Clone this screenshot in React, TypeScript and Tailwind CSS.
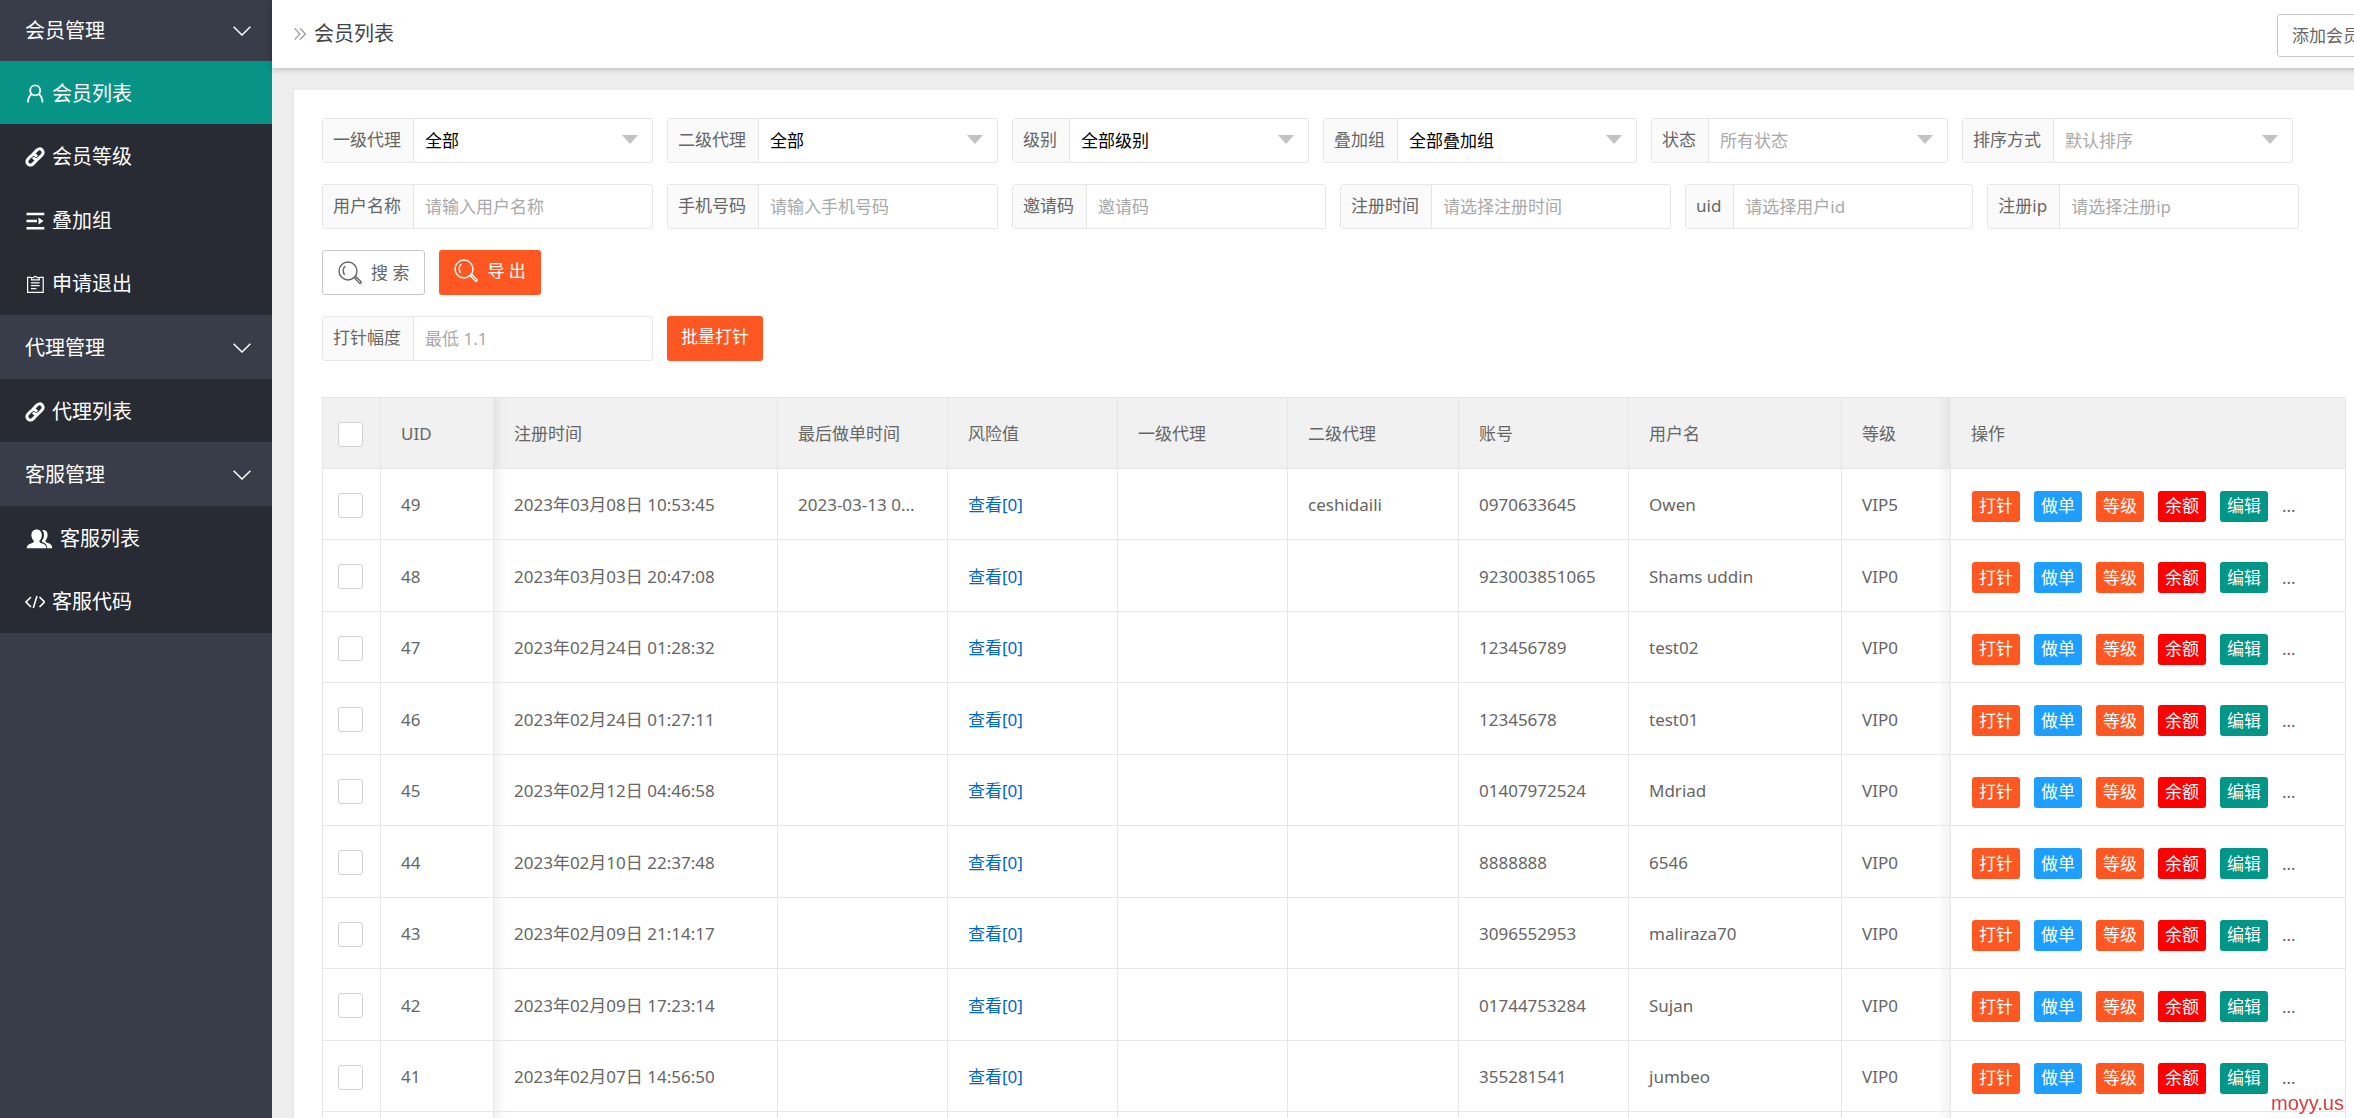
import React, { useState } from 'react';
import { clsx } from 'clsx';

type IconProps = { className?: string };

const UserIcon = ({ className }: IconProps) => (
  <svg viewBox="0 0 20 20" fill="none" stroke="currentColor" strokeWidth="1.8" className={className}>
    <circle cx="10.2" cy="6.4" r="5" />
    <path d="M6.6 10.2C4.2 11.8 3 14.600 2.900 18.500M13.800 10.200c2.400 1.600 3.600 4.400 3.700 8.300" />
  </svg>
);

const LinkIcon = ({ className }: IconProps) => (
  <svg viewBox="0 0 20 20" fill="none" stroke="currentColor" strokeWidth="3" strokeLinecap="round" className={className}>
    <path d="M7.900 7.300l4-4.200c1.500-1.600 3.700-1.600 5.100-.2 1.500 1.400 1.500 3.600 0 5.100l-3.200 3.300c-1.400 1.400-3.600 1.400-5 0" />
    <path d="M12.100 12.700l-4 4.200c-1.500 1.600-3.700 1.600-5.100.2-1.500-1.400-1.500-3.600 0-5.100l3.200-3.300c1.400-1.400 3.600-1.400 5 0" />
  </svg>
);

const StackIcon = ({ className }: IconProps) => (
  <svg viewBox="0 0 20 20" fill="currentColor" className={className}>
    <path d="M1.500 1.800h17.800v2.400H1.500zM1.500 8.800h10.500v2.400H1.500zM1.500 16h17.800v2.400H1.500zM13.500 6.600l5 3.400-5 3.400z" />
  </svg>
);

const FormIcon = ({ className }: IconProps) => (
  <svg viewBox="0 0 20 20" fill="none" stroke="currentColor" strokeWidth="1.200" className={className}>
    <path d="M6.500 3.300H2.600v15h15.600v-15h-3.900" />
    <path d="M6.500 5.800V3.600h2.100a1.900 1.900 0 0 1 3.600 0h2.100v2.200z" />
    <path d="M6 8.900h8.600M6 11.700h8.600M6 14.600h5.400" />
  </svg>
);

const FriendsIcon = ({ className }: IconProps) => (
  <svg viewBox="0 0 28 20" fill="currentColor" className={className}>
    <path d="M17.300 1.300c2.900-.8 5.300 1.100 5.300 4.600 0 2.200-.8 4.200-2 5.300-.3 1.400.2 2 1.800 2.600 3 1.100 4.800 2.100 4.800 5.400h-4.900c-.2-3.300-1.500-4.600-4.500-5.900-.9-.4-1.100-.8-1-1.500 1.400-1.500 2.200-3.600 2.200-5.800 0-1.900-.6-3.500-1.700-4.700z" />
    <path d="M11.600.4c3 0 5.200 2.200 5.200 5.500 0 2.300-.9 4.500-2.300 5.700-.3 1.500.2 2 2 2.700 3.200 1.200 4.900 1.900 5 4.900H1.700c.1-3 1.800-3.700 5-4.900 1.800-.7 2.300-1.200 2-2.700C7.300 10.400 6.400 8.200 6.400 5.900 6.400 2.600 8.600.4 11.600.4z" />
  </svg>
);

const CodeIcon = ({ className }: IconProps) => (
  <svg viewBox="0 0 20 20" fill="none" stroke="currentColor" strokeWidth="1.600" className={className}>
    <path d="M6 5L1 10l5 5M14.500 5l5 5-5 5M12 4L8.300 16" />
  </svg>
);

const ChevronIcon = ({ className }: IconProps) => (
  <svg viewBox="0 0 18 10" fill="none" stroke="currentColor" strokeWidth="1.500" className={className}>
    <path d="M.6.700L9 9 17.400.700" />
  </svg>
);

const DoubleArrowIcon = ({ className }: IconProps) => (
  <svg viewBox="0 0 12 12" fill="none" stroke="currentColor" strokeWidth="1.200" className={className}>
    <path d="M.6.300L5.900 6 .6 11.700M6 .300L11.300 6 6 11.700" />
  </svg>
);

const SearchIcon = ({ className }: IconProps) => (
  <svg viewBox="0 0 24 24" fill="none" stroke="currentColor" strokeWidth="1.400" className={className}>
    <circle cx="10" cy="10" r="9" />
    <path d="M7.400 5.200C5 6.700 4.300 10.600 6.600 13.800" />
    <path d="M16.200 16.500l1.300-1.200 5.300 5.300c.9.900-.6 2.400-1.500 1.500z" />
  </svg>
);

const menus = [
  {
    title: '会员管理',
    items: [
      { label: '会员列表', icon: UserIcon },
      { label: '会员等级', icon: LinkIcon },
      { label: '叠加组', icon: StackIcon },
      { label: '申请退出', icon: FormIcon }
    ]
  },
  {
    title: '代理管理',
    items: [{ label: '代理列表', icon: LinkIcon }]
  },
  {
    title: '客服管理',
    items: [
      { label: '客服列表', icon: FriendsIcon, wide: true },
      { label: '客服代码', icon: CodeIcon }
    ]
  }
];

const selects = [
  { id: 'agent1', label: '一级代理', value: '全部' },
  { id: 'agent2', label: '二级代理', value: '全部' },
  { id: 'level', label: '级别', value: '全部级别' },
  { id: 'group', label: '叠加组', value: '全部叠加组' },
  { id: 'status', label: '状态', value: '所有状态', muted: true },
  { id: 'sort', label: '排序方式', value: '默认排序', muted: true }
];

const inputs = [
  { id: 'username', label: '用户名称', placeholder: '请输入用户名称' },
  { id: 'tel', label: '手机号码', placeholder: '请输入手机号码' },
  { id: 'invite', label: '邀请码', placeholder: '邀请码' },
  { id: 'regtime', label: '注册时间', placeholder: '请选择注册时间' },
  { id: 'uid', label: 'uid', placeholder: '请选择用户id' },
  { id: 'regip', label: '注册ip', placeholder: '请选择注册ip' }
];

const members = [
  { uid: 49, regTime: '2023年03月08日 10:53:45', lastTime: '2023-03-13 0...', agent2: 'ceshidaili', account: '0970633645', name: 'Owen', level: 'VIP5' },
  { uid: 48, regTime: '2023年03月03日 20:47:08', account: '923003851065', name: 'Shams uddin', level: 'VIP0' },
  { uid: 47, regTime: '2023年02月24日 01:28:32', account: '123456789', name: 'test02', level: 'VIP0' },
  { uid: 46, regTime: '2023年02月24日 01:27:11', account: '12345678', name: 'test01', level: 'VIP0' },
  { uid: 45, regTime: '2023年02月12日 04:46:58', account: '01407972524', name: 'Mdriad', level: 'VIP0' },
  { uid: 44, regTime: '2023年02月10日 22:37:48', account: '8888888', name: '6546', level: 'VIP0' },
  { uid: 43, regTime: '2023年02月09日 21:14:17', account: '3096552953', name: 'maliraza70', level: 'VIP0' },
  { uid: 42, regTime: '2023年02月09日 17:23:14', account: '01744753284', name: 'Sujan', level: 'VIP0' },
  { uid: 41, regTime: '2023年02月07日 14:56:50', account: '355281541', name: 'jumbeo', level: 'VIP0' }
];

const actions = [
  { label: '打针', color: 'bg-[#ff5722]' },
  { label: '做单', color: 'bg-[#1e9fff]' },
  { label: '等级', color: 'bg-[#ff5722]' },
  { label: '余额', color: 'bg-[#ff0000]' },
  { label: '编辑', color: 'bg-[#009688]' }
];

const leftShade = 'bg-[linear-gradient(to_right,rgba(0,0,0,0.05),transparent_12px)]';
const rightShade = 'bg-[linear-gradient(to_left,rgba(0,0,0,0.05),transparent_12px)]';

const columns = [
  { title: 'UID', width: 'w-[113px]' },
  { title: '注册时间', width: 'w-[284px]', shade: leftShade },
  { title: '最后做单时间', width: 'w-[170px]' },
  { title: '风险值', width: 'w-[170px]' },
  { title: '一级代理', width: 'w-[170px]' },
  { title: '二级代理', width: 'w-[171px]' },
  { title: '账号', width: 'w-[170px]' },
  { title: '用户名', width: 'w-[213px]' },
  { title: '等级', width: 'w-[109px]', shade: rightShade },
  { title: '操作', width: '' }
];

const cell = 'border-r border-b border-[#e6e6e6] pt-[2px] pl-5 text-left font-normal whitespace-nowrap';

const Field = ({ id, label, children }: { id: string; label: string; children: React.ReactNode }) => (
  <div className="flex h-[45px] rounded-[3px] border border-[#e6e6e6] bg-white">
    <label htmlFor={id} className="flex items-center bg-[#fafafa] pr-[12px] pl-[10px] pb-[2px]">
      {label}
    </label>
    <div className="relative w-[239px] border-l border-[#e6e6e6]">{children}</div>
  </div>
);

const Checkbox = ({ label }: { label: string }) => (
  <input
    type="checkbox"
    aria-label={label}
    className="block h-[25px] w-[25px] appearance-none rounded-[3px] border border-[#d2d2d2] bg-white checked:bg-[#5fb878]"
  />
);

const Sidebar = () => {
  const [active, setActive] = useState('会员列表');

  return (
    <aside className="w-[272px] shrink-0 bg-[#393d49] text-[20px] text-white">
      {menus.map((menu, index) => (
        <nav key={menu.title}>
          <button
            className={clsx(
              'flex w-full items-center justify-between pr-[21px] pl-[25px]',
              index === 0 ? 'h-[61px]' : 'h-[64px] pt-[2px]'
            )}
          >
            {menu.title}
            <ChevronIcon className="h-[10px] w-[18px]" />
          </button>
          <ul className="bg-[#282b33]">
            {menu.items.map(item => (
              <li key={item.label} className="h-[63px] even:h-[64px]">
                <a
                  href="#"
                  onClick={() => setActive(item.label)}
                  className={clsx('flex h-full items-center gap-[7px] pt-[2px] pl-[25px]', active === item.label && 'bg-[#079487]')}
                >
                  <item.icon className={clsx('h-5', item.wide ? 'w-7' : 'w-5')} />
                  {item.label}
                </a>
              </li>
            ))}
          </ul>
        </nav>
      ))}
    </aside>
  );
};

const Filters = () => (
  <form className="flex flex-col gap-[21px]" onSubmit={e => e.preventDefault()}>
    <div className="flex gap-[14px]">
      {selects.map(item => (
        <Field key={item.id} id={item.id} label={item.label}>
          <select
            id={item.id}
            className={clsx(
              'h-full w-full appearance-none bg-transparent pl-[11px] outline-none',
              item.muted ? 'text-[#a9a9a9]' : 'text-black'
            )}
          >
            <option>{item.value}</option>
          </select>
          <svg viewBox="0 0 16 9" className="pointer-events-none absolute top-4 right-[14px] h-[9px] w-4 fill-[#c2c2c2]">
            <path d="M0 0h16L8 9z" />
          </svg>
        </Field>
      ))}
    </div>

    <div className="flex gap-[14px]">
      {inputs.map(item => (
        <Field key={item.id} id={item.id} label={item.label}>
          <input
            id={item.id}
            type="text"
            placeholder={item.placeholder}
            className="h-full w-full bg-transparent pl-[11px] outline-none placeholder:text-[#a9a9a9]"
          />
        </Field>
      ))}
    </div>

    <div className="flex gap-[14px]">
      <button className="flex h-[45px] items-center gap-[9px] rounded-[3px] border border-[#c9c9c9] bg-white px-[15px]">
        <SearchIcon className="h-6 w-6" />
        搜 索
      </button>
      <button className="flex h-[45px] items-center gap-[9px] rounded-[3px] bg-[#ff5722] px-[15px] pb-1 text-white">
        <SearchIcon className="h-6 w-6" />
        导 出
      </button>
    </div>

    <div className="flex gap-[14px]">
      <Field id="rate" label="打针幅度">
        <input
          id="rate"
          type="text"
          placeholder="最低 1.1"
          className="h-full w-full bg-transparent pl-[11px] outline-none placeholder:text-[#a9a9a9]"
        />
      </Field>
      <button className="h-[45px] rounded-[3px] bg-[#ff5722] px-[14px] pb-1 text-white">批量打针</button>
    </div>
  </form>
);

const MemberTable = () => (
  <table className="mt-9 w-full table-fixed border-separate border-spacing-0 border-t border-l border-[#e6e6e6]">
    <thead>
      <tr className="h-[71px] bg-[#f1f1f1]">
        <th className="w-[58px] border-r border-b border-[#e6e6e6] pt-[2px] pl-[15px]">
          <Checkbox label="全选" />
        </th>
        {columns.map(column => (
          <th key={column.title} className={clsx(cell, column.width, column.shade)}>
            {column.title}
          </th>
        ))}
      </tr>
    </thead>
    <tbody>
      {members.map(member => (
        <tr key={member.uid} className="h-[71px] even:h-[72px]">
          <td className="border-r border-b border-[#e6e6e6] pt-[2px] pl-[15px]">
            <Checkbox label={`选择 ${member.uid}`} />
          </td>
          <td className={cell}>{member.uid}</td>
          <td className={clsx(cell, leftShade)}>{member.regTime}</td>
          <td className={cell}>{member.lastTime}</td>
          <td className={cell}>
            <a href="#" className="text-[#0066cc]">
              查看[0]
            </a>
          </td>
          <td className={cell}></td>
          <td className={cell}>{member.agent2}</td>
          <td className={cell}>{member.account}</td>
          <td className={cell}>{member.name}</td>
          <td className={clsx(cell, rightShade)}>{member.level}</td>
          <td className="border-r border-b border-[#e6e6e6] pt-[4px] pl-[21px]">
            <div className="flex items-center gap-[14px]">
              {actions.map(action => (
                <button key={action.label} className={clsx('h-[31px] w-12 rounded-[3px] text-white', action.color)}>
                  {action.label}
                </button>
              ))}
              <span>...</span>
            </div>
          </td>
        </tr>
      ))}
      <tr className="h-[71px]">
        <td className={cell}></td>
        {columns.map(column => (
          <td key={column.title} className={clsx(cell, column.shade)}></td>
        ))}
      </tr>
    </tbody>
  </table>
);

export default function App() {
  return (
    <div className="flex h-screen overflow-hidden bg-[#eeeeee] font-['Noto_Sans','Noto_Sans_CJK_SC',sans-serif] text-[17px] leading-6 text-[#666666]">
      <Sidebar />

      {/* The page is slightly wider than the window and runs off its right side */}
      <main className="-mr-[42px] min-w-0 flex-1">
        <header className="flex h-[68px] items-center justify-between bg-white pr-[21px] pl-[22px] shadow-[0_1px_6px_rgba(0,0,0,0.25)]">
          <h1 className="flex items-center gap-2 text-[20px] text-[#444444]">
            <DoubleArrowIcon className="h-3 w-3 text-[#999999]" />
            会员列表
          </h1>
          <button className="mt-[3px] h-[43px] rounded-[3px] border border-[#c9c9c9] bg-white px-[14px]">添加会员</button>
        </header>

        <section className="m-[22px] bg-white p-7 shadow-[0_1px_6px_rgba(0,0,0,0.06)]">
          <Filters />
          <MemberTable />
        </section>
      </main>

      <div className="pointer-events-none fixed right-[10px] bottom-[3px] font-['Liberation_Sans',sans-serif] text-[20px] text-[#e03a3a]">
        moyy.us
      </div>
    </div>
  );
}
